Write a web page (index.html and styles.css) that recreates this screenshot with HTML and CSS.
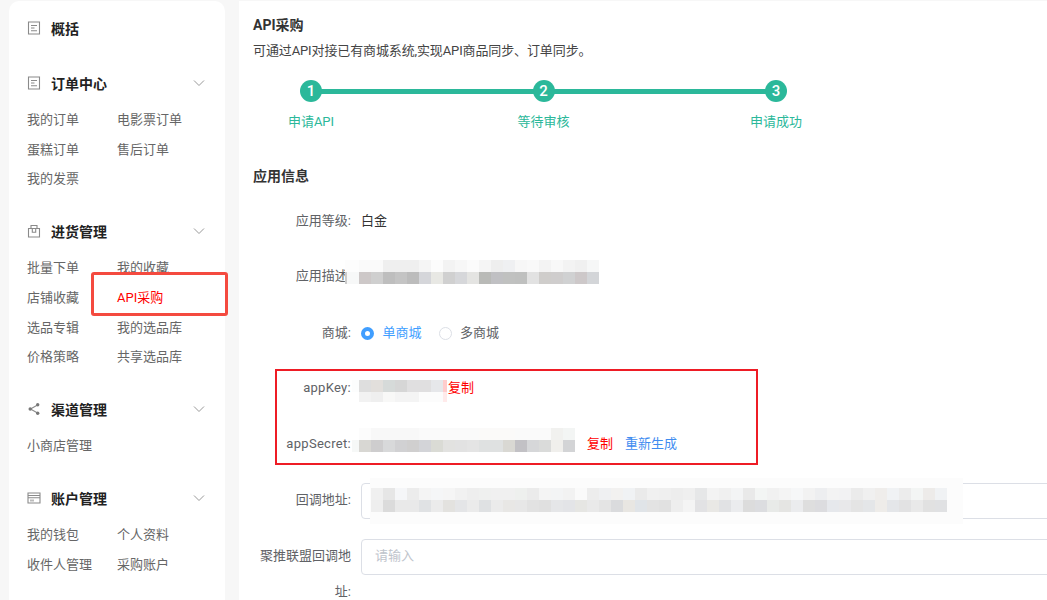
FILE: index.html
```html
<!DOCTYPE html>
<html lang="zh-CN">
<head>
<meta charset="utf-8">
<title>API采购</title>
<link rel="stylesheet" href="styles.css">
</head>
<body>
<div class="page">
  <aside class="sidebar">
    <section class="group group-single">
      <h3 class="group-title">
        <svg class="icon" viewBox="0 0 14 14"><path d="M1.5 1h11v12h-11zM4 4.5h6M4 7h3.5M4 9.7h6"/></svg>
        <span>概括</span>
      </h3>
    </section>
    <section class="group">
      <h3 class="group-title">
        <svg class="icon" viewBox="0 0 14 14"><path d="M1.5 1h11v12h-11zM4 4.5h6M4 7h3.5M4 9.7h6"/></svg>
        <span>订单中心</span>
        <svg class="chevron" viewBox="0 0 12 8"><path d="M1 1.5l5 5 5-5"/></svg>
      </h3>
      <ul class="links">
        <li>我的订单</li><li>电影票订单</li><li>蛋糕订单</li><li>售后订单</li><li>我的发票</li>
      </ul>
    </section>
    <section class="group">
      <h3 class="group-title">
        <svg class="icon" viewBox="0 0 14 14"><path d="M1.5 4.5h11V13h-11zM4 4.5v-3h6v3M5.3 4.5v3.7h3.4V4.5"/></svg>
        <span>进货管理</span>
        <svg class="chevron" viewBox="0 0 12 8"><path d="M1 1.5l5 5 5-5"/></svg>
      </h3>
      <ul class="links">
        <li>批量下单</li><li>我的收藏</li><li>店铺收藏</li><li class="active">API采购</li><li>选品专辑</li><li>我的选品库</li><li>价格策略</li><li>共享选品库</li>
      </ul>
    </section>
    <section class="group">
      <h3 class="group-title">
        <svg class="icon icon-share" viewBox="0 0 14 14"><path d="M10.5 3L3.5 7l7 4"/><circle cx="10.7" cy="2.8" r="1.7"/><circle cx="3.2" cy="7" r="1.7"/><circle cx="10.7" cy="11.2" r="1.7"/></svg>
        <span>渠道管理</span>
        <svg class="chevron" viewBox="0 0 12 8"><path d="M1 1.5l5 5 5-5"/></svg>
      </h3>
      <ul class="links">
        <li class="wide">小商店管理</li>
      </ul>
    </section>
    <section class="group">
      <h3 class="group-title">
        <svg class="icon icon-card" viewBox="0 0 14 14"><path d="M1 2h12v10H1zM1 4.5h12M1 6.7h12"/><rect x="3" y="8.5" width="4" height="2"/></svg>
        <span>账户管理</span>
        <svg class="chevron" viewBox="0 0 12 8"><path d="M1 1.5l5 5 5-5"/></svg>
      </h3>
      <ul class="links">
        <li>我的钱包</li><li>个人资料</li><li>收件人管理</li><li>采购账户</li>
      </ul>
    </section>
  </aside>

  <main class="content">
    <h2 class="page-title">API采购</h2>
    <p class="page-desc">可通过API对接已有商城系统,实现API商品同步、订单同步。</p>

    <div class="steps">
      <div class="step"><span class="step-dot">1</span><span class="step-label">申请API</span></div>
      <div class="step"><span class="step-dot">2</span><span class="step-label">等待审核</span></div>
      <div class="step"><span class="step-dot">3</span><span class="step-label">申请成功</span></div>
    </div>

    <h3 class="section-title">应用信息</h3>

    <div class="form">
      <div class="row row-nudge">
        <label class="label">应用等级:</label>
        <div class="value dark">白金</div>
      </div>
      <div class="row">
        <label class="label">应用描述:</label>
        <div class="value"></div>
        <div class="mosaic mosaic-desc"></div>
      </div>
      <div class="row row-nudge">
        <label class="label">商城:</label>
        <div class="value radios">
          <span class="radio radio-on"><i class="radio-dot"></i>单商城</span>
          <span class="radio"><i class="radio-dot"></i>多商城</span>
        </div>
      </div>
      <div class="row">
        <label class="label label-latin">appKey:</label>
        <div class="value"></div>
        <div class="mosaic mosaic-key"></div>
        <a class="copy copy-key">复制</a>
      </div>
      <div class="row">
        <label class="label label-latin">appSecret:</label>
        <div class="value secret-actions">
          <a class="copy">复制</a>
          <a class="regen">重新生成</a>
        </div>
        <div class="mosaic mosaic-secret"></div>
      </div>
      <div class="row">
        <label class="label">回调地址:</label>
        <div class="input"></div>
        <div class="mosaic-wash"><div class="mosaic mosaic-callback"></div></div>
      </div>
      <div class="row">
        <label class="label">聚推联盟回调地址:</label>
        <div class="input placeholder">请输入</div>
      </div>
    </div>
  </main>
</div>
<div class="mark mark-nav"></div>
<div class="mark mark-keys"></div>
</body>
</html>
```

FILE: styles.css
```css
* { box-sizing: border-box; }
html, body { margin: 0; height: 100%; }
body {
  position: relative;
  overflow: hidden;
  background: #f7f7f7;
  font-family: Roboto, "Noto Sans CJK SC", "Liberation Sans", sans-serif;
  font-size: 13px;
  color: #606266;
}
.page { display: flex; height: 600px; padding: 1px 0 0 9px; gap: 14px; }

.sidebar {
  flex: 0 0 216px;
  background: #fff;
  border-radius: 10px 10px 0 0;
  padding: 18px 18px 0;
}
.group { margin-bottom: 29.4px; }
.group-single { margin-bottom: 35px; }
.group-title {
  display: flex;
  align-items: center;
  margin: 0;
  height: 20px;
  font-size: 14px;
  font-weight: 700;
  color: #222;
}
.group-title span { flex: 1; margin-left: 10px; line-height: 20px; }
.icon { flex: none; width: 14px; height: 14px; margin: -2px 0 0 0; fill: none; stroke: #8a8a8a; stroke-width: 1.1; }
.icon-share circle { fill: #777; stroke: none; }
.icon-card rect { fill: #bbb; stroke: none; }
.chevron { flex: none; width: 12px; height: 8px; margin: -2px 2px 0 0; fill: none; stroke: #999; stroke-width: 1; }
.links {
  display: grid;
  grid-template-columns: 90px 1fr;
  grid-auto-rows: 29.6px;
  align-items: center;
  margin: 10px 0 0;
  padding: 0;
  list-style: none;
  color: #666;
}
.links li { white-space: nowrap; }
.links .active { color: #f00; }

.content {
  flex: 1;
  min-width: 0;
  background: #fff;
  padding: 14px 0 0 14px;
  overflow: hidden;
}
.page-title, .section-title { margin: 0; font-size: 14px; font-weight: 700; line-height: 20px; color: #333; }
.page-desc { margin: 6px 0 0; line-height: 20px; color: #444; letter-spacing: -0.12px; }

.steps {
  position: relative;
  display: flex;
  justify-content: space-between;
  width: 513px;
  margin: 19px 0 0 34px;
}
.steps::before {
  content: "";
  position: absolute;
  left: 24px;
  right: 24px;
  top: 9px;
  height: 5px;
  background: #2bb89a;
}
.step { position: relative; display: flex; flex-direction: column; align-items: center; width: 48px; }
.step-dot {
  width: 22px;
  height: 22px;
  border-radius: 50%;
  background: #2bb89a;
  color: #fff;
  font-size: 15px;
  font-weight: 500;
  line-height: 22px;
  text-align: center;
}
.step-label { margin-top: 10px; line-height: 20px; color: #2bb89a; white-space: nowrap; }

.section-title { margin-top: 34px; }
.form { margin-top: 17px; }
.row { position: relative; display: flex; margin-bottom: 20px; min-height: 36px; }
.row-nudge { padding-top: 1px; }
.label { flex: 0 0 98px; text-align: right; line-height: 36px; margin-top: -1px; }
.label-latin { letter-spacing: 0.3px; }
.value { display: flex; align-items: center; padding-left: 10px; line-height: 34px; height: 34px; }
.dark { color: #333; }
.radios { gap: 17px; }
.radio { display: flex; align-items: center; gap: 8.5px; color: #606266; }
.radio-dot { width: 13px; height: 13px; border: 1px solid #dcdfe6; border-radius: 50%; background: #fff; }
.radio-on { color: #409eff; }
.radio-on .radio-dot { border: 4px solid #409eff; }
.copy { color: #f00; }
.regen { color: #3f8cf0; margin-left: 12px; }
.secret-actions { padding-left: 236px; }
.copy-key { position: absolute; left: 195px; top: 7px; line-height: 20px; }

.input {
  flex: 0 0 720px;
  height: 36px;
  margin-left: 10px;
  border: 1px solid #dcdfe6;
  border-radius: 4px;
  background: #fff;
  padding-left: 13px;
  line-height: 32px;
}
.placeholder { color: #c0c4cc; }

.mosaic { position: absolute; background-repeat: no-repeat; }
.mosaic-desc {
  left: 92px; top: 1px; width: 254px; height: 24px;
  background-image:
    linear-gradient(90deg,#fdfdfd 0 14px,#fafafa 14px 38px,#efefef 38px 74px,#f5f5f5 74px 86px,#fcfcfc 86px 98px,#f3f3f3 98px 110px,#f7f7f7 110px 122px,#fbfbfb 122px 134px,#f5f5f5 134px 146px,#eee 146px 158px,#eff0f2 158px 170px,#f7f7f7 170px 182px,#f9f9f9 182px 194px,#f3f3f3 194px 206px,#f8f8f8 206px 218px,#f3f3f3 218px 230px,#f0f0f0 230px 242px,#f6f7f7 242px 254px),
    linear-gradient(90deg,#ccc 0 2px,#f7f8f8 2px 14px,#cdc8c8 14px 26px,#cfcfcf 26px 38px,#bebebe 38px 50px,#c4c4c4 50px 62px,#bcbcbc 62px 74px,#d5d6da 74px 86px,#e8e8e4 86px 98px,#d0d0d0 98px 110px,#d6d7da 110px 122px,#e4e4e2 122px 134px,#b9bab7 134px 146px,#c0c0c3 146px 158px,#c0c1c0 158px 170px,#bfc0bf 170px 182px,#e2e2e2 182px 194px,#cfcdcb 194px 206px,#cfcdcd 206px 218px,#d0d1d2 218px 230px,#cdc8c9 230px 242px,#d3d5d8 242px 254px);
  background-size: 100% 12px;
  background-position: 0 0, 0 12px;
}
.mosaic-key {
  left: 99px; top: 9px; width: 95px; height: 22px;
  background-image:
    linear-gradient(90deg,#fcfdfd 0 7px,#dedede 7px 19px,#e2dfdc 19px 31px,#d6dad9 31px 43px,#d6d6d6 43px 55px,#e0dfe0 55px 79px,#e6e7ea 79px 91px,#fcc 91px 95px),
    linear-gradient(90deg,#fff 0 7px,#f2f2f2 7px 19px,#efefef 19px 31px,#f8f8f7 31px 43px,#f4f4f4 43px 67px,#fcfcfc 67px 91px,#ffeaea 91px 95px);
  background-size: 100% 12px, 100% 10px;
  background-position: 0 0, 0 12px;
}
.mosaic-secret {
  left: 99px; top: 1px; width: 223px; height: 24px;
  background-image:
    linear-gradient(90deg,#fff 0 7px,#fcfcfc 7px 19px,#f8f8f8 19px 67px,#fafafa 67px 127px,#fbfaf9 127px 163px,#fafafa 163px 199px,#f1f1ef 199px 211px,#f3f5f4 211px 223px),
    linear-gradient(90deg,#f6f8f7 0 7px,#d8d7d3 7px 19px,#cecdce 19px 31px,#d8d9da 31px 43px,#d1d1d3 43px 55px,#d0cfcf 55px 67px,#d3d4d8 67px 79px,#dadbd5 79px 91px,#e2e2e0 91px 103px,#e2e2e2 103px 115px,#e4e4e4 115px 127px,#dfe1e1 127px 151px,#d9d8d3 151px 163px,#c2c1c5 163px 175px,#d6d7d9 175px 187px,#dadbda 187px 199px,#f0efec 199px 211px,#d3d4d6 211px 223px);
  background-size: 100% 12px;
  background-position: 0 0, 0 12px;
}
.mosaic-wash { position: absolute; left: 117px; top: -5px; width: 593px; height: 46px; background: #fcfcfc; }
.mosaic-callback {
  left: 1px; top: 10px; width: 576px; height: 24px;
  background-image:
    linear-gradient(90deg,#f0f0f0 0 12px,#e6e6e6 12px 24px,#f5f6f8 24px 36px,#ececec 36px 48px,#f4f4f4 48px 60px,#f5f6f7 60px 72px,#f5f5f5 72px 84px,#f1f1f1 84px 96px,#eee 96px 108px,#eff0ef 108px 120px,#f0f0f0 120px 144px,#eef0ee 144px 156px,#ebebeb 156px 168px,#f4f4f4 168px 180px,#f3f4f5 180px 192px,#f2f2f2 192px 204px,#fafafa 204px 216px,#ededed 216px 228px,#eff0f2 228px 240px,#f2f1f0 240px 252px,#f0f2f4 252px 264px,#eaeaea 264px 276px,#f0f0f0 276px 288px,#efefef 288px 300px,#ededed 300px 312px,#efefef 312px 324px,#e6e7e8 324px 336px,#f3f3f3 336px 348px,#f0f0f0 348px 360px,#f3f4f5 360px 372px,#e9e9e9 372px 384px,#f3f5f4 384px 396px,#f1f1f1 396px 408px,#f4f4f4 408px 420px,#f6f7f8 420px 432px,#f2f2f2 432px 444px,#edeef0 444px 456px,#f3f3f3 456px 468px,#f2f2f3 468px 480px,#ebebeb 480px 492px,#f0f0f0 492px 504px,#efedeb 504px 516px,#f0f2f4 516px 528px,#ececec 528px 540px,#f3f5f4 540px 552px,#edebe9 552px 564px,#f0f2f4 564px 576px),
    linear-gradient(90deg,#eee 0 12px,#dbdbdb 12px 24px,#e9e9e9 24px 48px,#e0e2e4 48px 60px,#ebebeb 60px 72px,#e3e2df 72px 84px,#e4e5e7 84px 96px,#ebebeb 96px 108px,#dfe1e3 108px 120px,#ebebeb 120px 132px,#e8e7e5 132px 144px,#e7e7e7 144px 156px,#e2e2e2 156px 168px,#e0e0e0 168px 180px,#e5e6e8 180px 192px,#e3e4e7 192px 204px,#e6e6e3 204px 216px,#e9e9e9 216px 228px,#e4e4e4 228px 240px,#dadbdd 240px 252px,#e8e6e2 252px 264px,#e0e4e8 264px 276px,#e3e3e3 276px 288px,#e1e1e1 288px 300px,#eee 300px 312px,#f4f4f4 312px 324px,#e2e2e4 324px 336px,#e9e8e5 336px 348px,#e1e2e4 348px 360px,#ebecee 360px 372px,#dcdcdc 372px 384px,#dcdde0 384px 396px,#e8eae8 396px 408px,#e5e5e3 408px 420px,#ebecee 420px 432px,#dedede 432px 444px,#dcdcdf 444px 456px,#e6e8ec 456px 468px,#e8e8ea 468px 480px,#e4e4e4 480px 492px,#e4e6e8 492px 504px,#eeece9 504px 516px,#e4e6e9 516px 528px,#e2e2e3 528px 540px,#e9e9e9 540px 552px,#e1e1e1 552px 564px,#e0e1e3 564px 576px);
  background-size: 100% 12px;
  background-position: 0 0, 0 12px;
}

.mark { position: absolute; pointer-events: none; }
.mark-nav { left: 91px; top: 272px; width: 137px; height: 44px; border: 3px solid #f44a3f; border-radius: 3px; }
.mark-keys { left: 275px; top: 369px; width: 483px; height: 96px; border: 2px solid #ee1c25; }
```
